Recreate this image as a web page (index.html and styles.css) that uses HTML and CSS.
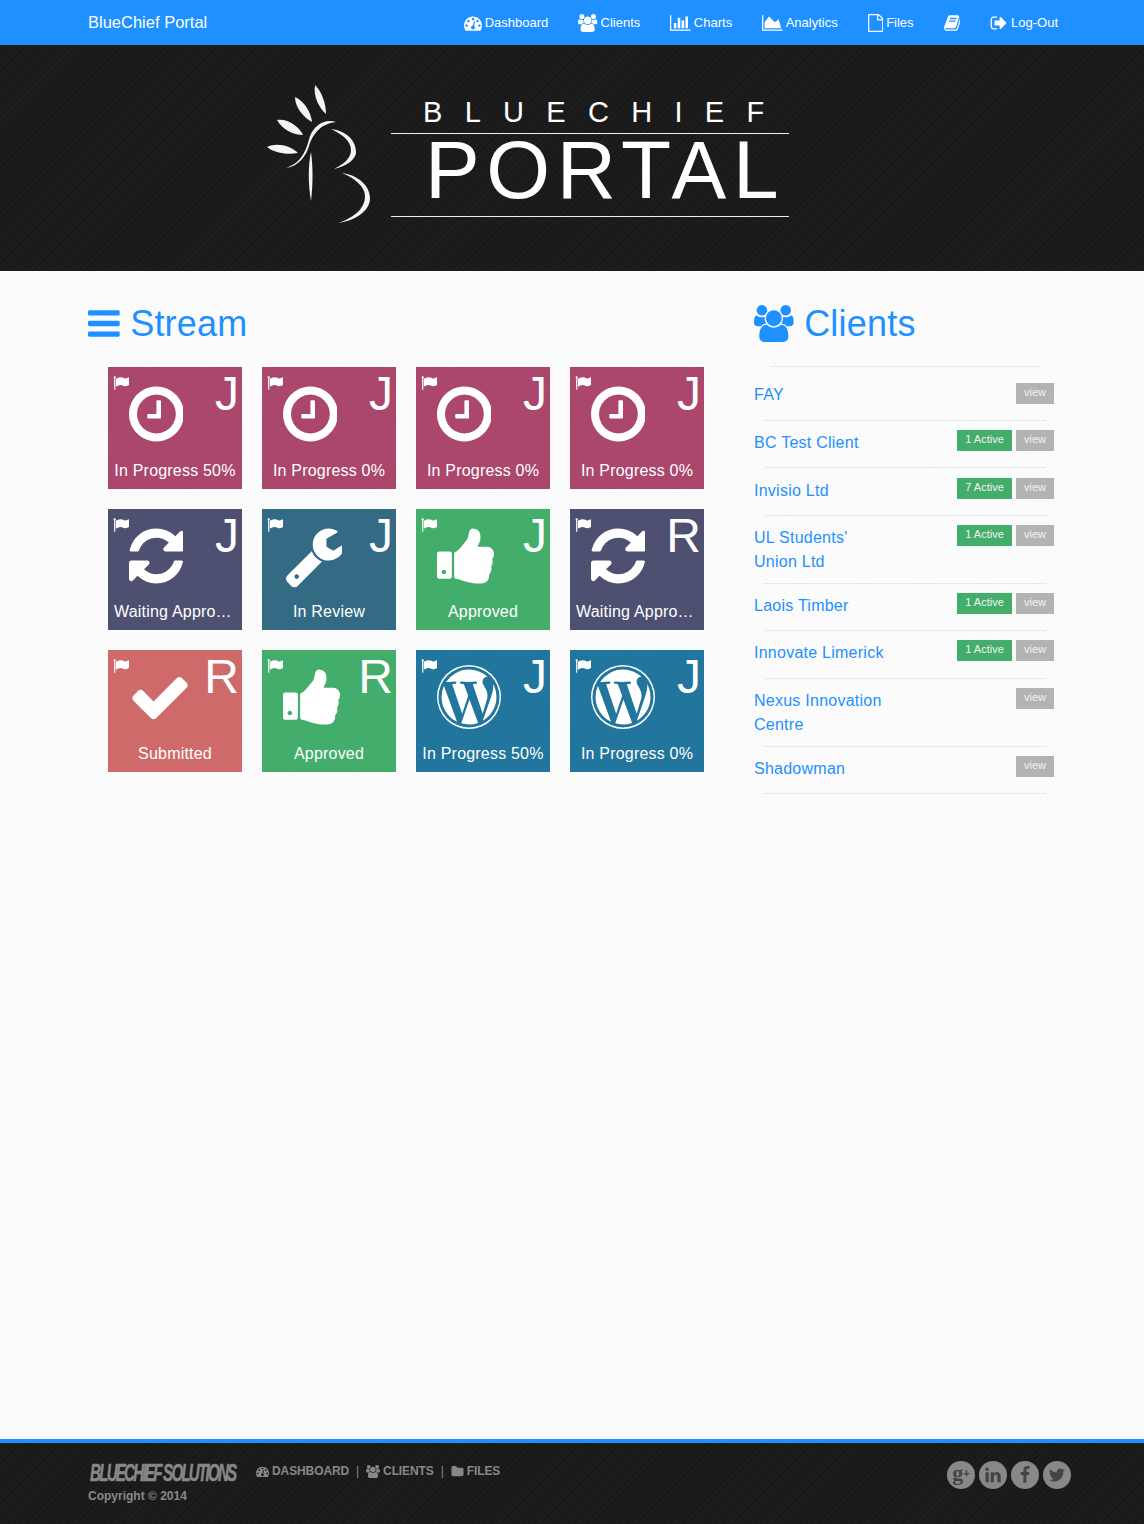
FILE: index.html
```html
<!DOCTYPE html>
<html lang="en">
<head>
    <meta charset="UTF-8">
    <title>BlueChief Portal</title>
    <link rel="stylesheet" href="styles.css">
</head>
<body>

    <!-- icon paths, reused below -->
    <svg class="sprite">
        <defs>
            <path id="i-clock" d="M1024 544v448q0 14-9 23t-23 9h-320q-14 0-23-9t-9-23v-64q0-14 9-23t23-9h224v-352q0-14 9-23t23-9h64q14 0 23 9t9 23zm416 352q0-148-73-273t-198-198-273-73-273 73-198 198-73 273 73 273 198 198 273 73 273-73 198-198 73-273zm224 0q0 209-103 385.5t-279.5 279.5-385.5 103-385.5-103-279.5-279.5-103-385.5 103-385.5 279.5-279.5 385.5-103 385.5 103 279.5 279.5 103 385.5z"/>
            <path id="i-refresh" d="M1639 1056q0 5-1 7-64 268-268 434.5t-478 166.5q-146 0-282.5-55t-243.5-157l-129 129q-19 19-45 19t-45-19-19-45v-448q0-26 19-45t45-19h448q26 0 45 19t19 45-19 45l-137 137q71 66 161 102t187 36q134 0 250-65t186-179q11-17 53-117 8-23 30-23h192q13 0 22.5 9.5t9.5 22.5zm25-800v448q0 26-19 45t-45 19h-448q-26 0-45-19t-19-45 19-45l138-138q-148-137-349-137-134 0-250 65t-186 179q-11 17-53 117-8 23-30 23h-199q-13 0-22.5-9.5t-9.5-22.5v-7q65-268 270-434.5t480-166.5q146 0 284 55.5t245 156.5l130-129q19-19 45-19t45 19 19 45z"/>
            <path id="i-wrench" d="M448 1472q0-26-19-45t-45-19-45 19-19 45 19 45 45 19 45-19 19-45zm644-420l-682 682q-37 37-90 37-52 0-91-37l-106-108q-38-36-38-90 0-53 38-91l681-681q39 98 114.5 173.5t173.5 114.5zm634-435q0 39-23 106-47 134-164.5 217.5t-258.5 83.5q-185 0-316.5-131.5t-131.5-316.5 131.5-316.5 316.5-131.5q58 0 121.5 16.5t107.5 46.5q16 11 16 28t-16 28l-293 169v224l193 107q5-3 79-48.5t135.5-81 70.5-35.5q15 0 23.5 10t8.5 25z"/>
            <path id="i-thumb" d="M320 1344q0-26-19-45t-45-19q-27 0-45.5 19t-18.5 45q0 27 18.5 45.5t45.5 18.5q26 0 45-18.5t19-45.5zm160-512v640q0 26-19 45t-45 19h-288q-26 0-45-19t-19-45v-640q0-26 19-45t45-19h288q26 0 45 19t19 45zm1184 0q0 86-55 149 15 44 15 76 3 76-43 137 17 56 0 117-15 57-54 94 9 112-49 181-64 76-197 78h-129q-66 0-144-15.5t-121.5-29-120.5-39.5q-123-43-158-44-26-1-45-19.5t-19-44.5v-641q0-25 18-43.5t43-20.5q24-2 76-59t101-121q68-87 101-120 18-18 31-48t17.5-48.5 13.5-60.5q7-39 12.5-61t19.5-52 34-50q19-19 45-19 46 0 82.5 10.5t60 26 40 40.5 24 45 12 50 5 45 .5 39q0 38-9.5 76t-19 60-27.5 56q-3 6-10 18t-11 22-8 24h277q78 0 135 57t57 135z"/>
            <path id="i-check" d="M1671 566q0 40-28 68l-724 724-136 136q-28 28-68 28t-68-28l-136-136-362-362q-28-28-28-68t28-68l136-136q28-28 68-28t68 28l294 295 656-657q28-28 68-28t68 28l136 136q28 28 28 68z"/>
            <path id="i-wp" d="M127 896q0-163 67-313l367 1005q-196-95-315-281t-119-411zm1288-39q0 19-2.5 38.5t-10 49.5-11.5 44-17.5 59-17.5 58l-76 256-278-826q46-3 88-8 19-2 26-18.5t-2.5-31-28.5-13.5l-205 10q-75-1-202-10-12-1-20.5 5t-11.5 15-1.5 18.5 9 16.5 19.5 8l80 8 120 328-168 504-280-832q46-3 88-8 19-2 26-18.5t-2.5-31-28.5-13.5l-205 10q-7 0-23-.5t-26-.5q105-160 274.5-253.5t367.5-93.5q147 0 280.5 53t238.5 149h-10q-55 0-92 40.5t-37 95.5q0 12 2 24t4 21.5 8 23 9 21 12 22.5 12.5 21 14.5 24 14 23q63 107 63 212zm-506 106l237 647q1 6 5 11-126 44-255 44-112 0-217-32zm661-436q95 174 95 369 0 209-104 385.5t-279 278.5l235-678q59-169 59-276 0-42-6-79zm-674-527q182 0 348 71t286 191 191 286 71 348-71 348-191 286-286 191-348 71-348-71-286-191-191-286-71-348 71-348 191-286 286-191 348-71zm0 1751q173 0 331.5-68t273-182.5 182.5-273 68-331.5-68-331.5-182.5-273-273-182.5-331.5-68-331.5 68-273 182.5-182.5 273-68 331.5 68 331.5 182.5 273 273 182.5 331.5 68z"/>
            <path id="i-flag" d="M320 256q0 72-64 110v1266q0 13-9.5 22.5t-22.5 9.5h-64q-13 0-22.5-9.5t-9.5-22.5v-1266q-64-38-64-110 0-53 37.5-90.5t90.5-37.5 90.5 37.5 37.5 90.5zm1472 64v763q0 25-12.5 38.5t-39.5 27.5q-215 116-369 116-61 0-123.5-22t-108.5-48-115.5-48-142.5-22q-192 0-464 146-17 9-33 9-26 0-45-19t-19-45v-742q0-32 31-55 21-14 79-43 236-120 421-120 107 0 200 29t219 88q38 19 88 19 54 0 117.5-21t110-47 88-47 54.5-21q26 0 45 19t19 45z"/>
            <path id="i-bars" d="M1664 1344v128q0 26-19 45t-45 19h-1408q-26 0-45-19t-19-45v-128q0-26 19-45t45-19h1408q26 0 45 19t19 45zm0-512v128q0 26-19 45t-45 19h-1408q-26 0-45-19t-19-45v-128q0-26 19-45t45-19h1408q26 0 45 19t19 45zm0-512v128q0 26-19 45t-45 19h-1408q-26 0-45-19t-19-45v-128q0-26 19-45t45-19h1408q26 0 45 19t19 45z"/>
            <path id="i-users" d="M593 896q-162 5-265 128h-134q-82 0-138-40.5t-56-118.5q0-353 124-353 6 0 43.5 21t97.5 42.5 119 21.5q67 0 133-23-5 37-5 66 0 139 81 256zm1071 637q0 120-73 189.5t-194 69.5h-874q-121 0-194-69.5t-73-189.5q0-53 3.5-103.5t14-109 26.5-108.5 43-97.5 62-81 85.5-53.5 111.5-20q10 0 43 21.5t73 48 107 48 135 21.5 135-21.5 107-48 73-48 43-21.5q61 0 111.5 20t85.5 53.5 62 81 43 97.5 26.5 108.5 14 109 3.5 103.5zm-1024-1277q0 106-75 181t-181 75-181-75-75-181 75-181 181-75 181 75 75 181zm704 384q0 159-112.5 271.5t-271.5 112.5-271.5-112.5-112.5-271.5 112.5-271.5 271.5-112.5 271.5 112.5 112.5 271.5zm576 225q0 78-56 118.5t-138 40.5h-134q-103-123-265-128 81-117 81-256 0-29-5-66 66 23 133 23 59 0 119-21.5t97.5-42.5 43.5-21q124 0 124 353zm-128-609q0 106-75 181t-181 75-181-75-75-181 75-181 181-75 181 75 75 181z"/>
            <path id="i-dash" d="M384 1152q0-53-37.5-90.5t-90.5-37.5-90.5 37.5-37.5 90.5 37.5 90.5 90.5 37.5 90.5-37.5 37.5-90.5zm192-448q0-53-37.5-90.5t-90.5-37.5-90.5 37.5-37.5 90.5 37.5 90.5 90.5 37.5 90.5-37.5 37.5-90.5zm428 481l101-382q6-26-7.5-48.5t-38.5-29.5-48 6.5-30 39.5l-101 382q-60 5-107 43.5t-63 98.5q-20 77 20 146t117 89 146-20 89-117q16-60-6-117t-72-91zm660-33q0-53-37.5-90.5t-90.5-37.5-90.5 37.5-37.5 90.5 37.5 90.5 90.5 37.5 90.5-37.5 37.5-90.5zm-640-640q0-53-37.5-90.5t-90.5-37.5-90.5 37.5-37.5 90.5 37.5 90.5 90.5 37.5 90.5-37.5 37.5-90.5zm448 192q0-53-37.5-90.5t-90.5-37.5-90.5 37.5-37.5 90.5 37.5 90.5 90.5 37.5 90.5-37.5 37.5-90.5zm320 448q0 261-141 483-19 29-54 29h-1402q-35 0-54-29-141-221-141-483 0-182 71-348t191-286 286-191 348-71 348 71 286 191 191 286 71 348z"/>
            <path id="i-bar" d="M512 896v512h-256v-512h256zm384-512v1024h-256v-1024h256zm1024 1152v128h-2048v-1536h128v1408h1920zm-640-896v768h-256v-768h256zm384-384v1152h-256v-1152h256z"/>
            <path id="i-area" d="M2048 1536v128h-2048v-1536h128v1408h1920zm-384-1024l256 896h-1664v-576l448-576 576 576z"/>
            <path id="i-file" d="M1596 380q28 28 48 76t20 88v1152q0 40-28 68t-68 28h-1344q-40 0-68-28t-28-68v-1600q0-40 28-68t68-28h896q40 0 88 20t76 48zm-444-244v376h376q-10-29-22-41l-313-313q-12-12-41-22zm384 1528v-1024h-416q-40 0-68-28t-28-68v-416h-768v1536h1280z"/>
            <path id="i-book" d="M1639 478q40 57 18 129l-275 906q-19 64-76.5 107.5t-122.5 43.5h-923q-77 0-148.5-53.5t-99.5-131.5q-24-67-2-127 0-4 3-27t4-37q1-8-3-21.5t-3-19.5q2-11 8-21t16.5-23.5 16.5-23.5q23-38 45-91.5t30-91.5q3-10 .5-30t-.5-28q3-11 17-28t17-23q21-36 42-92t25-90q1-9-2.5-32t.5-28q4-13 22-30.5t22-22.5q19-26 42.5-84.5t27.5-96.5q1-8-3-25.5t-2-26.5q2-8 9-18t18-23 17-21q8-12 16.5-30.5t15-35 16-36 19.5-32 26.5-23.5 36-11.5 47.5 5.5l-1 3q38-9 51-9h761q74 0 114 56t18 130l-274 906q-36 119-71.5 153.5t-128.5 34.5h-869q-27 0-38 15-11 16-1 43 24 70 144 70h923q29 0 56-15.5t35-41.5l300-987q7-22 5-57 38 15 59 43zm-1064 2q-4 13 2 22.5t20 9.5h608q13 0 25.5-9.5t16.5-22.5l21-64q4-13-2-22.5t-20-9.5h-608q-13 0-25.5 9.5t-16.5 22.5zm-83 256q-4 13 2 22.5t20 9.5h608q13 0 25.5-9.5t16.5-22.5l21-64q4-13-2-22.5t-20-9.5h-608q-13 0-25.5 9.5t-16.5 22.5z"/>
            <path id="i-out" d="M704 1440q0 4 1 20t.5 26.5-3 23.5-10 19.5-20.5 6.5h-320q-119 0-203.5-84.5t-84.5-203.5v-704q0-119 84.5-203.5t203.5-84.5h320q13 0 22.5 9.5t9.5 22.5q0 4 1 20t.5 26.5-3 23.5-10 19.5-20.5 6.5h-320q-66 0-113 47t-47 113v704q0 66 47 113t113 47h312l11.5 1 11.5 3 8 5.5 7 9 2 13.5zm928-544q0 26-19 45l-544 544q-19 19-45 19t-45-19-19-45v-288h-448q-26 0-45-19t-19-45v-384q0-26 19-45t45-19h448v-288q0-26 19-45t45-19 45 19l544 544q19 19 19 45z"/>
            <path id="i-folder" d="M1728 608v704q0 92-66 158t-158 66h-1216q-92 0-158-66t-66-158v-960q0-92 66-158t158-66h320q92 0 158 66t66 158v32h672q92 0 158 66t66 158z"/>
            <path id="i-in" d="M477 625v991h-330v-991h330zm21-306q1 73-50.5 122t-135.5 49h-2q-82 0-132-49t-50-122q0-74 51.5-122.5t134.5-48.5 133 48.5 51 122.5zm1166 729v568h-329v-530q0-105-40.5-164.5t-126.5-59.5q-63 0-105.5 34.5t-63.5 85.5q-11 30-11 81v553h-329q2-399 2-647t-1-296l-1-48h329v144h-2q20-32 41-56t56.5-52 87-43.5 114.5-15.5q171 0 275 113.5t104 332.5z"/>
            <path id="i-fb" d="M1343 12v264h-157q-86 0-116 36t-30 108v189h293l-39 296h-254v759h-306v-759h-255v-296h255v-218q0-186 104-288.5t277-102.5q147 0 228 12z"/>
            <path id="i-tw" d="M1684 408q-67 98-162 167 1 14 1 42 0 130-38 259.5t-115.5 248.5-184.5 210.5-258 146-323 54.5q-271 0-496-145 35 4 78 4 225 0 401-138-105-2-188-64.5t-114-159.5q33 5 61 5 43 0 85-11-112-23-185.5-111.5t-73.5-205.5v-4q68 38 146 41-66-44-105-115t-39-154q0-88 44-163 121 149 294.5 238.5t371.5 99.5q-8-38-8-74 0-134 94.5-228.5t228.5-94.5q140 0 236 102 109-21 205-78-37 115-142 178 92-10 184-50z"/>
        </defs>
    </svg>

    <nav class="topbar">
        <a class="brand" href="#">BlueChief Portal</a>
        <ul class="nav-links">
            <li><svg class="nav-ico" viewBox="0 0 1792 1792"><use href="#i-dash"/></svg>Dashboard</li>
            <li><svg class="nav-ico" viewBox="0 0 1920 1792"><use href="#i-users"/></svg>Clients</li>
            <li><svg class="nav-ico" viewBox="-128 0 2048 1792"><use href="#i-bar"/></svg>Charts</li>
            <li><svg class="nav-ico" viewBox="0 0 2048 1792"><use href="#i-area"/></svg>Analytics</li>
            <li><svg class="nav-ico" viewBox="128 0 1536 1792"><use href="#i-file"/></svg>Files</li>
            <li><svg class="nav-ico" viewBox="0 0 1664 1792"><use href="#i-book"/></svg></li>
            <li><svg class="nav-ico nav-ico-out" viewBox="0 0 1664 1792"><use href="#i-out"/></svg>Log-Out</li>
        </ul>
    </nav>

    <header class="banner">
        <svg class="banner-mark" viewBox="0 0 104 140">
            <path d="M49 1C56 8 60 20 60 30C53 24 47 12 49 1Z"/>
            <path d="M29 13C38 17 45 28 46 38C37 33 29 23 29 13Z"/>
            <path d="M11 36C21 34 33 42 37 51C27 51 16 45 11 36Z"/>
            <path d="M1 63C11 58 25 62 32 69C21 71 8 69 1 63Z"/>
            <path d="M70 38C58 34 48 42 44 52C41 62 38 78 20 84C33 82 40 72 43 62C47 50 54 40 70 38Z"/>
            <path d="M45 68C47 82 47 100 45 117C42 100 42 82 45 68Z"/>
            <path d="M65 45C80 47 90 56 90 68C90 76 80 82 68 85C78 80 85 74 85 66C85 57 76 50 65 45Z"/>
            <path d="M76 89C92 91 104 102 104 114C104 127 90 136 73 139C88 133 99 125 99 112C99 102 88 94 76 89Z"/>
        </svg>
        <div class="banner-text">
            <div class="banner-top">BLUECHIEF</div>
            <div class="banner-big">PORTAL</div>
        </div>
    </header>

    <main class="content">
        <section class="stream">
            <h2 class="section-title"><svg class="title-ico" viewBox="128 0 1536 1792"><use href="#i-bars"/></svg>Stream</h2>
            <div class="tiles">
                <div class="tile plum">
                    <svg class="tile-flag" viewBox="0 0 1792 1792"><use href="#i-flag"/></svg><span class="tile-who">J</span>
                    <svg class="tile-ico" viewBox="128 0 1536 1792"><use href="#i-clock"/></svg>
                    <div class="tile-label">In Progress 50%</div>
                </div>
                <div class="tile plum">
                    <svg class="tile-flag" viewBox="0 0 1792 1792"><use href="#i-flag"/></svg><span class="tile-who">J</span>
                    <svg class="tile-ico" viewBox="128 0 1536 1792"><use href="#i-clock"/></svg>
                    <div class="tile-label">In Progress 0%</div>
                </div>
                <div class="tile plum">
                    <svg class="tile-flag" viewBox="0 0 1792 1792"><use href="#i-flag"/></svg><span class="tile-who">J</span>
                    <svg class="tile-ico" viewBox="128 0 1536 1792"><use href="#i-clock"/></svg>
                    <div class="tile-label">In Progress 0%</div>
                </div>
                <div class="tile plum">
                    <svg class="tile-flag" viewBox="0 0 1792 1792"><use href="#i-flag"/></svg><span class="tile-who">J</span>
                    <svg class="tile-ico" viewBox="128 0 1536 1792"><use href="#i-clock"/></svg>
                    <div class="tile-label">In Progress 0%</div>
                </div>

                <div class="tile slate">
                    <svg class="tile-flag" viewBox="0 0 1792 1792"><use href="#i-flag"/></svg><span class="tile-who">J</span>
                    <svg class="tile-ico" viewBox="128 0 1536 1792"><use href="#i-refresh"/></svg>
                    <div class="tile-label tile-label-cut">Waiting Appro…</div>
                </div>
                <div class="tile teal">
                    <svg class="tile-flag" viewBox="0 0 1792 1792"><use href="#i-flag"/></svg><span class="tile-who">J</span>
                    <svg class="tile-ico" viewBox="0 0 1664 1792"><use href="#i-wrench"/></svg>
                    <div class="tile-label">In Review</div>
                </div>
                <div class="tile green">
                    <svg class="tile-flag" viewBox="0 0 1792 1792"><use href="#i-flag"/></svg><span class="tile-who">J</span>
                    <svg class="tile-ico" viewBox="64 0 1664 1792"><use href="#i-thumb"/></svg>
                    <div class="tile-label">Approved</div>
                </div>
                <div class="tile slate">
                    <svg class="tile-flag" viewBox="0 0 1792 1792"><use href="#i-flag"/></svg><span class="tile-who">R</span>
                    <svg class="tile-ico" viewBox="128 0 1536 1792"><use href="#i-refresh"/></svg>
                    <div class="tile-label tile-label-cut">Waiting Appro…</div>
                </div>

                <div class="tile coral">
                    <svg class="tile-flag" viewBox="0 0 1792 1792"><use href="#i-flag"/></svg><span class="tile-who">R</span>
                    <svg class="tile-ico tile-ico-check" viewBox="0 0 1792 1792"><use href="#i-check"/></svg>
                    <div class="tile-label">Submitted</div>
                </div>
                <div class="tile green">
                    <svg class="tile-flag" viewBox="0 0 1792 1792"><use href="#i-flag"/></svg><span class="tile-who">R</span>
                    <svg class="tile-ico" viewBox="64 0 1664 1792"><use href="#i-thumb"/></svg>
                    <div class="tile-label">Approved</div>
                </div>
                <div class="tile blue">
                    <svg class="tile-flag" viewBox="0 0 1792 1792"><use href="#i-flag"/></svg><span class="tile-who">J</span>
                    <svg class="tile-ico" viewBox="0 0 1792 1792"><use href="#i-wp"/></svg>
                    <div class="tile-label">In Progress 50%</div>
                </div>
                <div class="tile blue">
                    <svg class="tile-flag" viewBox="0 0 1792 1792"><use href="#i-flag"/></svg><span class="tile-who">J</span>
                    <svg class="tile-ico" viewBox="0 0 1792 1792"><use href="#i-wp"/></svg>
                    <div class="tile-label">In Progress 0%</div>
                </div>
            </div>
        </section>

        <aside class="clients">
            <h2 class="section-title"><svg class="title-ico" viewBox="0 0 1920 1792"><use href="#i-users"/></svg>Clients</h2>
            <hr class="rule rule-first">
            <div class="client client-first">
                <a class="client-name" href="#">FAY</a>
                <span class="tag tag-view">view</span>
            </div>
            <hr class="rule">
            <div class="client">
                <a class="client-name" href="#">BC Test Client</a>
                <span class="tag tag-active">1 Active</span>
                <span class="tag tag-view">view</span>
            </div>
            <hr class="rule">
            <div class="client">
                <a class="client-name" href="#">Invisio Ltd</a>
                <span class="tag tag-active">7 Active</span>
                <span class="tag tag-view">view</span>
            </div>
            <hr class="rule">
            <div class="client">
                <a class="client-name" href="#">UL Students' Union Ltd</a>
                <span class="tag tag-active">1 Active</span>
                <span class="tag tag-view">view</span>
            </div>
            <hr class="rule">
            <div class="client">
                <a class="client-name" href="#">Laois Timber</a>
                <span class="tag tag-active">1 Active</span>
                <span class="tag tag-view">view</span>
            </div>
            <hr class="rule">
            <div class="client">
                <a class="client-name" href="#">Innovate Limerick</a>
                <span class="tag tag-active">1 Active</span>
                <span class="tag tag-view">view</span>
            </div>
            <hr class="rule">
            <div class="client">
                <a class="client-name" href="#">Nexus Innovation Centre</a>
                <span class="tag tag-view">view</span>
            </div>
            <hr class="rule">
            <div class="client">
                <a class="client-name" href="#">Shadowman</a>
                <span class="tag tag-view">view</span>
            </div>
            <hr class="rule">
        </aside>
    </main>

    <footer class="footer">
        <div class="footer-left">
            <div class="footer-top">
                <div class="footer-brand"><span class="footer-logo">BLUECHIEF SOLUTIONS</span></div>
                <ul class="footer-links">
                    <li><svg class="foot-ico" viewBox="0 0 1792 1792"><use href="#i-dash"/></svg>DASHBOARD</li>
                    <li class="foot-sep">|</li>
                    <li><svg class="foot-ico" viewBox="0 0 1920 1792"><use href="#i-users"/></svg>CLIENTS</li>
                    <li class="foot-sep">|</li>
                    <li><svg class="foot-ico" viewBox="0 0 1792 1792"><use href="#i-folder"/></svg>FILES</li>
                </ul>
            </div>
            <div class="copyright">Copyright © 2014</div>
        </div>
        <div class="social">
            <span class="social-btn social-g">g<small>+</small></span>
            <span class="social-btn"><svg viewBox="0 0 1792 1792"><use href="#i-in"/></svg></span>
            <span class="social-btn"><svg viewBox="0 0 1792 1792"><use href="#i-fb"/></svg></span>
            <span class="social-btn"><svg viewBox="0 0 1792 1792"><use href="#i-tw"/></svg></span>
        </div>
    </footer>

</body>
</html>
```

FILE: styles.css
```css
* {
    box-sizing: border-box;
}

html, body {
    height: 100%;
}

body {
    margin: 0;
    min-height: 1524px;
    display: flex;
    flex-direction: column;
    font-family: "Liberation Sans", Arial, sans-serif;
    color: #fff;
    background: repeating-linear-gradient(45deg, #fcfcfc 0, #fcfcfc 3px, #f9f9f9 3px, #f9f9f9 5px);
}

ul {
    list-style: none;
    margin: 0;
    padding: 0;
}

a {
    color: inherit;
    text-decoration: none;
}

.sprite {
    display: none;
}

svg {
    fill: currentColor;
    flex: none;
}

/* top bar */
.topbar {
    height: 45px;
    flex: none;
    display: flex;
    align-items: center;
    padding: 0 86px 0 88px;
    background: #1e90ff;
}

.brand {
    font-size: 16.5px;
}

.nav-links {
    margin-left: auto;
    display: flex;
    gap: 30px;
    font-size: 13px;
}

.nav-links li {
    display: flex;
    align-items: center;
    gap: 3px;
}

.nav-ico {
    height: 18px;
    width: auto;
}

.nav-ico-out {
    margin-right: 1px;
}

/* banner */
.banner {
    height: 226px;
    flex: none;
    display: flex;
    align-items: flex-start;
    padding: 39px 0 0 266px;
    background: repeating-linear-gradient(135deg, #1d1d1d 0, #1d1d1d 2px, #191919 2px, #191919 4px);
}

.banner-mark {
    width: 104px;
    height: 140px;
    fill: #f4f4f4;
}

.banner-text {
    width: 398px;
    margin: 5px 0 0 21px;
}

.banner-top {
    height: 45px;
    padding-left: 32px;
    border-bottom: 1px solid #eee;
    font-size: 29px;
    line-height: 46px;
    letter-spacing: 22.3px;
}

.banner-big {
    height: 83px;
    padding-left: 34px;
    border-bottom: 1px solid #eee;
    font-size: 82px;
    line-height: 72px;
    letter-spacing: 6.6px;
}

/* main */
.content {
    flex: 1;
    display: flex;
    padding: 32px 0 0 88px;
}

.stream {
    width: 666px;
}

.clients {
    width: 300px;
}

.section-title {
    display: flex;
    align-items: center;
    gap: 10.5px;
    height: 40px;
    margin: 0 0 24px;
    padding-top: 2px;
    font-size: 36px;
    font-weight: normal;
    letter-spacing: 0.2px;
    color: #1e90ff;
}

.title-ico {
    height: 37px;
    width: auto;
    margin-top: -2px;
}

.tiles {
    display: grid;
    grid-template-columns: repeat(4, 134px);
    grid-auto-rows: 121.5px;
    gap: 20px;
    padding-left: 20px;
}

.tile {
    position: relative;
    padding: 15px 6px 0;
    overflow: hidden;
}

.plum { background: #ab476c; }
.slate { background: #4d5070; }
.teal { background: #336b85; }
.green { background: #43ad6b; }
.coral { background: #cf6a6a; }
.blue { background: #22759d; }

.tile-ico {
    display: block;
    height: 64px;
    width: auto;
    margin-left: 14.5px;
}

.tile-ico-check {
    margin-left: 14px;
}

.tile-label {
    margin-top: 12.5px;
    line-height: 24px;
    font-size: 16px;
    letter-spacing: 0.2px;
    text-align: center;
    white-space: nowrap;
}

.tile-label-cut {
    text-align: left;
}

.tile-flag {
    position: absolute;
    top: 8px;
    left: 5px;
    width: 16px;
    height: 16px;
}

.tile-who {
    position: absolute;
    top: 2px;
    right: 3px;
    font-size: 48px;
    line-height: 50px;
}

/* clients list */
.clients .section-title {
    margin-bottom: 23px;
}

.rule {
    height: 1px;
    margin: 0 7px 0 10px;
    border: 0;
    background: #e8e8e8;
}

.rule-first {
    margin: 0 13px 0 16px;
}

.client {
    display: flex;
    align-items: flex-start;
    gap: 4px;
    min-height: 46.4px;
    padding: 9.2px 0 8.8px;
}

.client-first {
    min-height: 53px;
    padding-top: 16px;
}

.client-name {
    width: 140px;
    margin: 1px auto 0 0;
    font-size: 16px;
    line-height: 24px;
    letter-spacing: 0.25px;
    color: #1e90ff;
}

.client-first .client-name {
    margin-top: 0;
}

.tag {
    height: 21px;
    font-size: 11px;
    line-height: 18px;
    text-align: center;
    color: #f2f2f2;
}

.tag-active {
    width: 55px;
    background: #43ad6b;
}

.tag-view {
    width: 38px;
    background: #b3b3b3;
}

/* footer */
.footer {
    height: 85px;
    flex: none;
    display: flex;
    justify-content: space-between;
    padding: 16px 73px 0 88px;
    border-top: 4px solid #1e90ff;
    color: #888;
    background: repeating-linear-gradient(135deg, #1d1d1d 0, #1d1d1d 2px, #191919 2px, #191919 4px);
}

.footer-top {
    display: flex;
    align-items: center;
    height: 24px;
}

.footer-brand {
    width: 168px;
    flex: none;
    overflow: hidden;
    padding: 4px 0 0 2px;
}

/* no comic face installed, squeeze a heavy italic to the same width */
.footer-logo {
    display: block;
    transform: scaleX(0.63);
    transform-origin: left center;
    font-size: 24px;
    line-height: 24px;
    font-weight: bold;
    font-style: italic;
    letter-spacing: -2.8px;
    white-space: nowrap;
    -webkit-text-stroke: 0.5px #888;
}

.footer-links {
    display: flex;
    gap: 7px;
    font-size: 12px;
    font-weight: bold;
    letter-spacing: -0.1px;
}

.footer-links li {
    display: flex;
    align-items: center;
    gap: 3px;
}

.foot-ico {
    height: 13px;
    width: auto;
}

.foot-sep {
    font-weight: normal;
}

.copyright {
    margin-top: 6px;
    font-size: 12px;
    font-weight: bold;
}

.social {
    display: flex;
    gap: 4px;
    margin-top: 2px;
    height: 28px;
    color: #444;
}

.social-btn {
    width: 28px;
    height: 28px;
    display: flex;
    align-items: center;
    justify-content: center;
    border-radius: 50%;
    background: #888;
}

.social-btn svg {
    width: 18px;
    height: 18px;
}

.social-g {
    padding-bottom: 5px;
    font-family: "Liberation Serif", serif;
    font-size: 22px;
    font-weight: bold;
    line-height: 22px;
}

.social-g small {
    font-size: 11px;
    font-family: "Liberation Sans", sans-serif;
    font-weight: bold;
}
```
